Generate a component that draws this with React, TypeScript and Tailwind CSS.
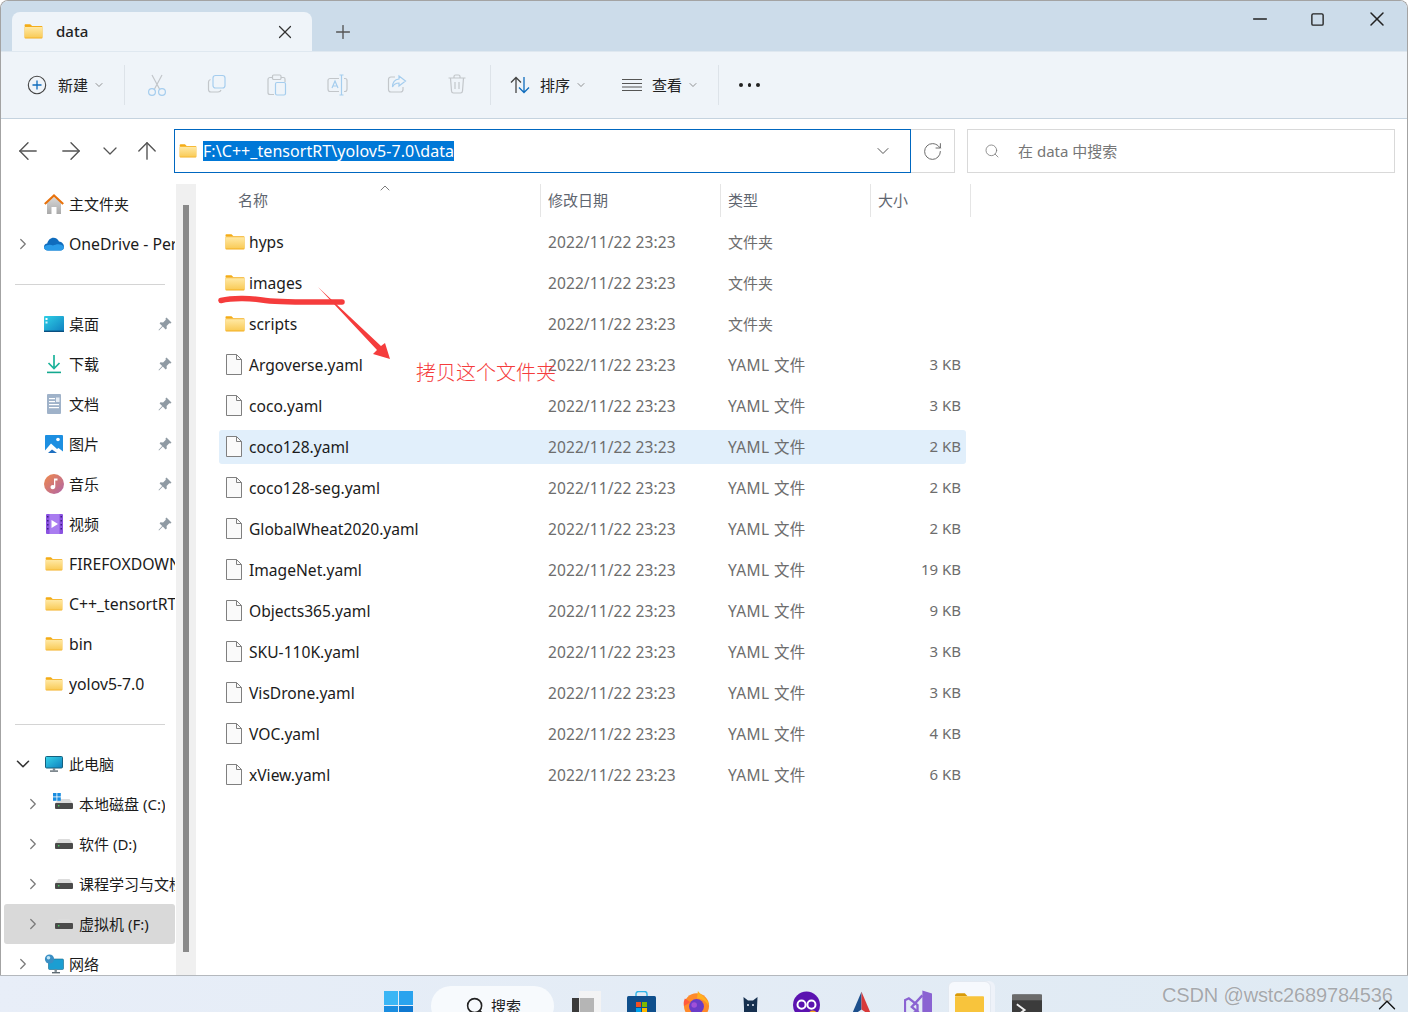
import { ChevronDown, ChevronRight, ChevronUp, ArrowLeft, ArrowRight, ArrowUp, RotateCw, Search, X, Plus, Minus, Square } from 'lucide-react';

// Folder icon, same drawing in tab, address bar, sidebar and list
function FolderIcon({ w = 20, h = 16 }: { w?: number; h?: number }) {
  return (
    <svg width={w} height={h} viewBox="0 0 20 16" className="shrink-0">
      <defs>
        <linearGradient id="folderFill" x1="0" y1="0" x2="0" y2="1">
          <stop offset="0" stopColor="#ffe9a5" />
          <stop offset="1" stopColor="#f9cb58" />
        </linearGradient>
      </defs>
      <path d="M0.5 1.2C0.5 .6 1 .2 1.5 .2H6.5L8.5 2.2H0.5Z" fill="#f4ac16" />
      <rect x="0.5" y="2.2" width="19" height="13.3" rx="0.8" fill="#f4ae1e" />
      <rect x="0.5" y="3.2" width="19" height="11.3" fill="url(#folderFill)" />
    </svg>
  );
}

function FileIcon() {
  return (
    <svg width="18" height="21" viewBox="0 0 18 21" className="shrink-0">
      <path d="M1.5 .5H11.5L16.5 5.5V20.5H1.5Z" fill="#fafafa" stroke="#7f7f7f" />
      <path d="M11.5 .5V5.5H16.5" fill="none" stroke="#7f7f7f" />
    </svg>
  );
}

function PinIcon() {
  return (
    <svg width="14" height="14" viewBox="0 0 14 14">
      <path d="M8.5 .5L13.5 5.5L12.5 6.5L11.3 6.2L8.6 8.9L8.8 11.6L7.6 12.4L4.8 9.6L1 13.5L.5 13L4.2 9L1.6 6.4L2.4 5.2L5.1 5.4L7.8 2.7L7.5 1.5Z" fill="#8f9aa3" />
    </svg>
  );
}

function HomeIcon() {
  return (
    <svg width="20" height="20" viewBox="0 0 20 20">
      <defs>
        <linearGradient id="homeWall" x1="0" y1="0" x2="0" y2="1">
          <stop offset="0" stopColor="#d8d8d8" />
          <stop offset="1" stopColor="#a9a9a9" />
        </linearGradient>
      </defs>
      <path d="M3 9L10 3L17 9V20H12.5V13H7.5V20H3Z" fill="url(#homeWall)" />
      <path d="M.8 10L10 1.5L19.2 10" fill="none" stroke="#e8720c" strokeWidth="2.2" />
    </svg>
  );
}

function CloudIcon() {
  return (
    <svg width="20" height="14" viewBox="0 0 20 14">
      <path d="M4 13.5C1.5 13.5 0 12 0 10C0 8 1.4 6.8 3.2 6.6C4 3 6.5 .8 9.5 .8C12 .8 14 2.2 15 4.5C17.8 4.7 20 7 20 9.8C20 12 18.6 13.5 16.5 13.5Z" fill="#0f6cbd" />
      <path d="M4 13.5C1.5 13.5 0 12 0 10C2 8 6 7 9 8.5C12 7 17 6 20 9.8C20 12 18.6 13.5 16.5 13.5Z" fill="#2a9be8" />
    </svg>
  );
}

function DesktopIcon() {
  return (
    <svg width="20" height="16" viewBox="0 0 20 16">
      <defs>
        <linearGradient id="deskFill" x1="0" y1="0" x2="1" y2="1">
          <stop offset="0" stopColor="#2fd0e6" />
          <stop offset="1" stopColor="#0f7fc0" />
        </linearGradient>
      </defs>
      <rect width="20" height="16" rx="1" fill="url(#deskFill)" />
      <rect y="14.6" width="20" height="1.4" fill="#0a4f80" />
      <rect x="1.5" y="2" width="2" height="2" fill="#fff" />
      <rect x="1.5" y="5.5" width="2" height="2" fill="#d8f3fa" />
    </svg>
  );
}

function DownloadIcon() {
  return (
    <svg width="16" height="20" viewBox="0 0 16 20">
      <path d="M8 1V14M2.5 9L8 14.5L13.5 9" fill="none" stroke="#1cb39b" strokeWidth="1.7" />
      <rect x="1" y="17.6" width="14" height="1.6" fill="#14a98f" />
    </svg>
  );
}

function DocIcon() {
  return (
    <svg width="14" height="20" viewBox="0 0 14 20">
      <rect width="14" height="20" rx="1" fill="#9fb2c9" />
      <rect x="2" y="4" width="6" height="1.2" fill="#fff" />
      <rect x="2" y="7" width="6" height="1.2" fill="#fff" />
      <rect x="9" y="3.5" width="3.5" height="4.5" fill="#e5ecf4" />
      <rect x="2" y="10" width="10" height="1.2" fill="#fff" />
      <rect x="2" y="13" width="10" height="1.2" fill="#fff" />
    </svg>
  );
}

function PictureIcon() {
  return (
    <svg width="18" height="18" viewBox="0 0 18 18">
      <rect width="18" height="18" rx="1" fill="#1d8fe1" />
      <circle cx="13" cy="4.5" r="1.8" fill="#fff" />
      <path d="M0 15.5L6 8.5L12 14L13.5 13L18 16.5V18H0Z" fill="#fff" />
      <path d="M3 18L7 14.5L12 18Z" fill="#1d6fc0" />
    </svg>
  );
}

function MusicIcon() {
  return (
    <svg width="20" height="20" viewBox="0 0 20 20">
      <defs>
        <linearGradient id="musicFill" x1="0" y1="0" x2="1" y2="1">
          <stop offset="0" stopColor="#f0894a" />
          <stop offset="1" stopColor="#b065a8" />
        </linearGradient>
      </defs>
      <circle cx="10" cy="10" r="10" fill="url(#musicFill)" />
      <path d="M10 4.5H13.5V6.5H11.3V12.8C11.3 14.2 10.2 15.2 8.8 15.2C7.5 15.2 6.5 14.4 6.5 13.2C6.5 12 7.6 11.1 8.8 11.1C9.2 11.1 9.7 11.2 10 11.4Z" fill="#fff" />
    </svg>
  );
}

function VideoIcon() {
  return (
    <svg width="17" height="20" viewBox="0 0 17 20">
      <rect width="17" height="20" rx="1" fill="#8a52e0" />
      <rect x="3.5" y="0" width="10" height="20" fill="#a97cf0" />
      <path d="M5.5 6L12 10L5.5 14Z" fill="#fff" />
      <g fill="#3f1e85">
        <rect x="1" y="2" width="1.5" height="1.5" />
        <rect x="1" y="6" width="1.5" height="1.5" />
        <rect x="1" y="10" width="1.5" height="1.5" />
        <rect x="1" y="14" width="1.5" height="1.5" />
        <rect x="14.5" y="2" width="1.5" height="1.5" />
        <rect x="14.5" y="6" width="1.5" height="1.5" />
        <rect x="14.5" y="10" width="1.5" height="1.5" />
        <rect x="14.5" y="14" width="1.5" height="1.5" />
      </g>
    </svg>
  );
}

function MonitorIcon() {
  return (
    <svg width="18" height="16" viewBox="0 0 18 16">
      <defs>
        <linearGradient id="monFill" x1="0" y1="0" x2="1" y2="1">
          <stop offset="0" stopColor="#37d5ea" />
          <stop offset="1" stopColor="#0e7fbd" />
        </linearGradient>
      </defs>
      <rect x=".5" y=".5" width="17" height="11.5" rx="1" fill="url(#monFill)" stroke="#15607f" />
      <rect x="7.8" y="12" width="2.4" height="2.4" fill="#7d8a92" />
      <rect x="5" y="14.4" width="8" height="1.4" fill="#5f6b73" />
    </svg>
  );
}

function DriveIcon({ system = false }: { system?: boolean }) {
  return (
    <span className="relative block w-[18px] h-[10px] shrink-0">
      <svg width="18" height="10" viewBox="0 0 18 10" className="block">
        <path d="M3.5 0H14.5L18 4.5H0Z" fill="#dcdcdc" />
        <rect y="4" width="18" height="6" rx="1" fill="#4b4b4b" />
        <rect x="3" y="6" width="1.4" height="1.4" fill="#46d160" />
      </svg>
      {system && (
        <svg width="8" height="8" viewBox="0 0 8 8" className="absolute -left-[2px] -top-[6px]">
          <rect width="3.5" height="3.5" fill="#1a8de0" />
          <rect x="4.3" width="3.5" height="3.5" fill="#1a8de0" />
          <rect y="4.3" width="3.5" height="3.5" fill="#1a8de0" />
          <rect x="4.3" y="4.3" width="3.5" height="3.5" fill="#1a8de0" />
        </svg>
      )}
    </span>
  );
}

function NetworkIcon() {
  return (
    <svg width="20" height="20" viewBox="0 0 20 20">
      <rect x="4.5" y="5" width="15" height="10.5" rx="1" fill="#1b9ed2" stroke="#14688c" strokeWidth=".6" />
      <rect x="10.5" y="15.5" width="2.4" height="2.4" fill="#7d8a92" />
      <rect x="8" y="18" width="8" height="1.4" fill="#5f6b73" />
      <circle cx="5.5" cy="5" r="4.6" fill="#3a8fc4" />
      <circle cx="4.5" cy="3.8" r="1.8" fill="#bfe4f6" />
    </svg>
  );
}

function SidebarRow({
  indent = 0,
  chevron,
  icon,
  label,
  pinned,
  selected,
  latin,
}: {
  indent?: number;
  chevron?: 'right' | 'down';
  icon: React.ReactNode;
  label: string;
  pinned?: boolean;
  selected?: boolean;
  latin?: boolean;
}) {
  return (
    <div className={`h-10 ml-[3px] w-[171px] flex items-center rounded-[3px] ${selected ? 'bg-[#d9d9d9]' : ''}`}>
      <span className={`shrink-0 flex text-[#7b7b7b] ${indent ? 'w-[51px] pl-[21px]' : 'w-[40px] pl-[11px]'}`}>
        <span className="w-4 h-4 flex items-center justify-center">
          {chevron === 'right' && <ChevronRight size={18} strokeWidth={1.7} className="shrink-0" />}
          {chevron === 'down' && <ChevronDown size={22} strokeWidth={1.7} className="shrink-0 text-[#333333]" />}
        </span>
      </span>
      <span className={`shrink-0 flex justify-center ${indent ? 'w-[18px] mr-[6px]' : 'w-5 mr-[5px]'}`}>{icon}</span>
      <span className={`min-w-0 overflow-hidden whitespace-nowrap text-[#1b1b1b] ${latin ? 'text-[15.8px] pt-[2px]' : 'text-[15px]'}`}>{label}</span>
      {pinned && (
        <span className="ml-auto mr-[3px] shrink-0 flex">
          <PinIcon />
        </span>
      )}
    </div>
  );
}

function SidebarLine() {
  return (
    <div className="h-10 flex items-center pl-[14px]">
      <div className="w-[150px] h-px bg-[#d4d4d4]" />
    </div>
  );
}

const files = [
  { name: 'hyps', type: '文件夹', size: '', folder: true },
  { name: 'images', type: '文件夹', size: '', folder: true },
  { name: 'scripts', type: '文件夹', size: '', folder: true },
  { name: 'Argoverse.yaml', type: 'YAML 文件', size: '3 KB' },
  { name: 'coco.yaml', type: 'YAML 文件', size: '3 KB' },
  { name: 'coco128.yaml', type: 'YAML 文件', size: '2 KB', hover: true },
  { name: 'coco128-seg.yaml', type: 'YAML 文件', size: '2 KB' },
  { name: 'GlobalWheat2020.yaml', type: 'YAML 文件', size: '2 KB' },
  { name: 'ImageNet.yaml', type: 'YAML 文件', size: '19 KB' },
  { name: 'Objects365.yaml', type: 'YAML 文件', size: '9 KB' },
  { name: 'SKU-110K.yaml', type: 'YAML 文件', size: '3 KB' },
  { name: 'VisDrone.yaml', type: 'YAML 文件', size: '3 KB' },
  { name: 'VOC.yaml', type: 'YAML 文件', size: '4 KB' },
  { name: 'xView.yaml', type: 'YAML 文件', size: '6 KB' },
];

export default function App() {
  return (
    <div className="relative w-[1408px] h-[1012px] overflow-hidden flex flex-col bg-white font-['Noto_Sans','Noto_Sans_CJK_SC',sans-serif]">
      {/* Window */}
      <div className="h-[975px] flex flex-col border-l border-r border-t border-[#a3a3a3] rounded-t-lg overflow-hidden">
        {/* Title bar with tab */}
        <div className="h-[50px] shrink-0 bg-[#ccdcea] flex items-end">
          <div className="ml-[11px] w-[300px] h-[39px] bg-[#eff4f9] rounded-t-lg flex items-center pl-3">
            <FolderIcon w={19} h={15} />
            <span className="ml-[13px] text-[15px] font-medium text-[#222222]">data</span>
            <span className="ml-auto mr-[19px] w-4 h-4 flex items-center justify-center">
              <X size={22} strokeWidth={1.3} className="shrink-0 text-[#333333]" />
            </span>
          </div>
          <div className="h-[39px] flex items-center ml-[20px]">
            <Plus size={22} strokeWidth={1.5} className="text-[#555555]" />
          </div>
          <div className="ml-auto self-start h-9 flex items-center text-[#222222]">
            <Minus size={22} strokeWidth={1.4} />
            <Square size={15} strokeWidth={2.2} className="ml-[39px]" />
            <X size={24} strokeWidth={1.5} className="ml-[40px] mr-[18px]" />
          </div>
        </div>

        {/* Command bar */}
        <div className="h-[68px] shrink-0 bg-[#eff4f9] border-t border-b border-[#c5d3df] border-t-[#dfe8f0] flex items-center pl-[26px] text-[15px] text-[#222222]">
          <svg width="20" height="20" viewBox="0 0 20 20" className="shrink-0">
            <circle cx="10" cy="10" r="8.7" fill="none" stroke="#444444" strokeWidth="1.1" />
            <path d="M10 5.5V14.5M5.5 10H14.5" stroke="#0f6cbd" strokeWidth="1.3" />
          </svg>
          <span className="ml-[11px] w-[30px] whitespace-nowrap">新建</span>
          <ChevronDown size={12} strokeWidth={1.4} className="ml-[5px] shrink-0 text-[#666666]" />
          <div className="ml-[19px] w-px h-10 bg-[#dde3e9]" />
          <div className="ml-[2px] flex">
            <span className="w-[60px] flex justify-center">
              <svg width="20" height="22" viewBox="0 0 20 22" fill="none" strokeWidth="1.2">
                <path d="M5 1L12.5 15M15 1L7.5 15" stroke="#c2c6ca" />
                <circle cx="5" cy="18" r="3.4" stroke="#a5cdee" />
                <circle cx="15" cy="18" r="3.4" stroke="#a5cdee" />
              </svg>
            </span>
            <span className="w-[60px] flex justify-center">
              <svg width="20" height="20" viewBox="0 0 20 20" fill="none" strokeWidth="1.2">
                <path d="M3.5 5.5C2 6 1.5 7 1.5 8V15.5C1.5 17 2.5 18 4 18H11C12.5 18 13.5 17.5 14 16" stroke="#c2c6ca" />
                <rect x="6" y="1.5" width="12" height="12.5" rx="2.5" stroke="#a5cdee" />
              </svg>
            </span>
            <span className="w-[60px] flex justify-center">
              <svg width="20" height="22" viewBox="0 0 20 22" fill="none" strokeWidth="1.2">
                <path d="M5.5 3.5H3C2 3.5 1 4.5 1 5.5V18.5C1 20 2 20.5 3 20.5H7M14 3.5H16.5C17.5 3.5 18 4 18 5V8" stroke="#c2c6ca" />
                <rect x="5.5" y="1" width="8.5" height="4.5" rx="1.2" stroke="#c2c6ca" />
                <rect x="8.5" y="8.5" width="10" height="12.5" rx="1.5" stroke="#a5cdee" />
              </svg>
            </span>
            <span className="w-[60px] flex justify-center">
              <svg width="21" height="22" viewBox="0 0 21 22" fill="none" strokeWidth="1.2">
                <path d="M12 4.5H3C2 4.5 1 5.5 1 6.5V15C1 16.5 2 17.5 3 17.5H12M17 4.5H18C19 4.5 20 5.5 20 6.5V15C20 16.5 19 17.5 18 17.5H17" stroke="#c2c6ca" />
                <path d="M14.5 1V21M12.5 1H16.5M12.5 21H16.5M5 14L8 7L11 14M6 12H10" stroke="#a5cdee" />
              </svg>
            </span>
            <span className="w-[60px] flex justify-center">
              <svg width="20" height="20" viewBox="0 0 20 20" fill="none" strokeWidth="1.2">
                <path d="M8 3H4C2.5 3 1.5 4 1.5 5.5V15.5C1.5 17 2.5 18 4 18H13.5C15 18 16 17 16 15.5V13" stroke="#c2c6ca" />
                <path d="M12 2L18.5 7L12 12V9C9 9 7 10 5.5 13C5.5 8.5 8 5.5 12 5Z" stroke="#a5cdee" />
              </svg>
            </span>
            <span className="w-[60px] flex justify-center">
              <svg width="18" height="20" viewBox="0 0 18 20" fill="none" stroke="#c2c6ca" strokeWidth="1.2">
                <path d="M.5 4H17.5M6 4V2.5C6 1.5 6.8 1 7.5 1H10.5C11.2 1 12 1.5 12 2.5V4M2.5 4L3.5 17C3.6 18.2 4.5 19 5.5 19H12.5C13.5 19 14.4 18.2 14.5 17L15.5 4M7 8V15M11 8V15" />
              </svg>
            </span>
          </div>
          <div className="ml-[3px] w-px h-10 bg-[#dde3e9]" />
          <svg width="20" height="18" viewBox="0 0 20 18" fill="none" strokeWidth="1.3" className="ml-[19px] shrink-0">
            <path d="M6 17V1.5M1 6.5L6 1.5L11 6.5" stroke="#444444" />
            <path d="M14 1V16.5M9 11.5L14 16.5L19 11.5" stroke="#0f6cbd" />
          </svg>
          <span className="ml-[10px] w-[30px] whitespace-nowrap">排序</span>
          <ChevronDown size={12} strokeWidth={1.4} className="ml-[5px] shrink-0 text-[#666666]" />
          <svg width="20" height="14" viewBox="0 0 20 14" stroke="#555555" className="ml-[35px] shrink-0">
            <path d="M0 1.5H20M0 5.5H20M0 9H20M0 12.5H20" />
          </svg>
          <span className="ml-[10px] w-[30px] whitespace-nowrap">查看</span>
          <ChevronDown size={12} strokeWidth={1.4} className="ml-[5px] shrink-0 text-[#666666]" />
          <div className="ml-[19px] w-px h-10 bg-[#dde3e9]" />
          <div className="ml-5 flex gap-[5px]">
            <span className="w-[3.5px] h-[3.5px] rounded-full bg-[#222222]" />
            <span className="w-[3.5px] h-[3.5px] rounded-full bg-[#222222]" />
            <span className="w-[3.5px] h-[3.5px] rounded-full bg-[#222222]" />
          </div>
        </div>

        {/* Address row */}
        <div className="h-[65px] shrink-0 flex items-center pl-[17px] pb-[1px]">
          <span className="w-5 h-5 flex items-center justify-center shrink-0">
            <ArrowLeft size={28} strokeWidth={1.2} className="shrink-0 text-[#555555]" />
          </span>
          <span className="ml-[23px] w-5 h-5 flex items-center justify-center shrink-0">
            <ArrowRight size={28} strokeWidth={1.2} className="shrink-0 text-[#555555]" />
          </span>
          <span className="ml-[22px] w-[14px] h-5 flex items-center justify-center shrink-0">
            <ChevronDown size={24} strokeWidth={1.3} className="shrink-0 text-[#555555]" />
          </span>
          <span className="ml-[20px] w-5 h-5 flex items-center justify-center shrink-0">
            <ArrowUp size={28} strokeWidth={1.2} className="shrink-0 text-[#555555]" />
          </span>
          <div className="ml-[17px] w-[737px] h-11 shrink-0 border border-[#0067c0] flex items-center pl-1">
            <FolderIcon w={18} h={14} />
            <span className="ml-[6px] bg-[#0078d7] text-white text-[16px] tracking-[0.06px] leading-[20px] whitespace-nowrap">F:\C++_tensortRT\yolov5-7.0\data</span>
            <ChevronDown size={20} strokeWidth={1.2} className="ml-auto mr-[17px] text-[#555555]" />
          </div>
          <div className="w-11 h-11 shrink-0 border border-l-0 border-[#d9d9d9] flex items-center justify-center">
            <RotateCw size={21} strokeWidth={1.1} className="text-[#666666]" />
          </div>
          <div className="ml-3 w-[428px] h-11 shrink-0 border border-[#d9d9d9] flex items-center pl-4 text-[15px] text-[#767676]">
            <Search size={16} strokeWidth={1.2} className="text-[#777777]" />
            <span className="ml-[18px]">在 data 中搜索</span>
          </div>
        </div>

        {/* Body */}
        <div className="flex-1 min-h-0 flex">
          {/* Navigation pane */}
          <div className="w-[175px] shrink-0 overflow-hidden">
            <SidebarRow icon={<HomeIcon />} label="主文件夹" />
            <SidebarRow chevron="right" icon={<CloudIcon />} label="OneDrive - Personal" latin />
            <SidebarLine />
            <SidebarRow icon={<DesktopIcon />} label="桌面" pinned />
            <SidebarRow icon={<DownloadIcon />} label="下载" pinned />
            <SidebarRow icon={<DocIcon />} label="文档" pinned />
            <SidebarRow icon={<PictureIcon />} label="图片" pinned />
            <SidebarRow icon={<MusicIcon />} label="音乐" pinned />
            <SidebarRow icon={<VideoIcon />} label="视频" pinned />
            <SidebarRow icon={<FolderIcon w={18} h={14} />} label="FIREFOXDOWNLOADS" latin />
            <SidebarRow icon={<FolderIcon w={18} h={14} />} label="C++_tensortRT" latin />
            <SidebarRow icon={<FolderIcon w={18} h={14} />} label="bin" latin />
            <SidebarRow icon={<FolderIcon w={18} h={14} />} label="yolov5-7.0" latin />
            <SidebarLine />
            <SidebarRow chevron="down" icon={<MonitorIcon />} label="此电脑" />
            <SidebarRow indent={1} chevron="right" icon={<DriveIcon system />} label="本地磁盘 (C:)" />
            <SidebarRow indent={1} chevron="right" icon={<DriveIcon />} label="软件 (D:)" />
            <SidebarRow indent={1} chevron="right" icon={<DriveIcon />} label="课程学习与文档" />
            <SidebarRow indent={1} chevron="right" icon={<DriveIcon />} label="虚拟机 (F:)" selected />
            <SidebarRow chevron="right" icon={<NetworkIcon />} label="网络" />
          </div>

          {/* Scrollbar */}
          <div className="w-5 shrink-0 bg-[#f0f0f0] pl-[7px] pt-[21px]">
            <div className="w-[6px] h-[747px] bg-[#8a8a8a]" />
          </div>

          {/* File list */}
          <div className="pl-[23px]">
            <div className="relative h-[33px] w-[752px] grid grid-cols-[322px_180px_150px_100px] text-[15px] text-[#5f6670]">
              <div className="border-r border-[#e5e5e5] pl-[19px] flex items-center">名称</div>
              <ChevronUp size={16} strokeWidth={1.3} className="absolute left-[158px] -top-[4px] text-[#666666]" />
              <div className="border-r border-[#e5e5e5] pl-[7px] flex items-center">修改日期</div>
              <div className="border-r border-[#e5e5e5] pl-[7px] flex items-center">类型</div>
              <div className="border-r border-[#e5e5e5] pl-[7px] flex items-center">大小</div>
            </div>
            <div className="mt-[8px] flex flex-col gap-[7px]">
              {files.map((f) => (
                <div
                  key={f.name}
                  className={`h-[34px] w-[747px] rounded-[3px] grid grid-cols-[321px_180px_150px_96px] items-center text-[15px] ${f.hover ? 'bg-[#e1effb]' : ''}`}
                >
                  <div className="flex items-center">
                    <span className="w-[30px] pl-[6px] flex">{f.folder ? <FolderIcon /> : <FileIcon />}</span>
                    <span className="pt-[2px] text-[15.6px] text-[#1b1b1b] whitespace-nowrap">{f.name}</span>
                  </div>
                  <div className="pl-2 pt-[2px] text-[15.5px] tracking-[0.1px] text-[#6d6d6d]">2022/11/22 23:23</div>
                  <div className={`pl-2 text-[#6d6d6d] ${f.folder ? 'text-[15px]' : 'pt-[2px] text-[15.5px] tracking-[0.4px]'}`}>{f.type}</div>
                  <div className="pr-[5px] pb-[2px] text-right text-[#6d6d6d]">{f.size}</div>
                </div>
              ))}
            </div>
          </div>
        </div>
      </div>

      {/* Taskbar, icons cut off by the bottom of the capture */}
      <div className="h-[37px] shrink-0 overflow-hidden border-t border-[#b4b8bd] bg-gradient-to-r from-[#e8eef8] to-[#dfeaf3] flex items-start pl-[384px]">
        <div className="mt-[15px] shrink-0 w-[29px] h-[29px] grid grid-cols-2 gap-[1px]">
          <span className="bg-[#3bb6f5]" />
          <span className="bg-[#2aa3ee]" />
          <span className="bg-[#1a8de0]" />
          <span className="bg-[#0f78d0]" />
        </div>
        <div className="ml-[18px] mt-[10px] shrink-0 w-[123px] h-[40px] rounded-full bg-[#f7fafd] flex items-start pt-[9px] pl-[34px] text-[15px] text-[#222222]">
          <Search size={21} strokeWidth={1.8} className="mt-[1px] shrink-0" />
          <span className="ml-[5px] leading-[22px]">搜索</span>
        </div>
        <div className="ml-[18px] mt-[15px] shrink-0 relative w-[29px] h-[29px]">
          <div className="absolute left-0 top-[7px] w-[22px] h-[22px] bg-[#3a3a3a]" />
          <div className="absolute right-0 top-0 w-[22px] h-[22px] bg-[#f4f4f4] opacity-90" />
          <div className="absolute left-[8px] top-[7px] w-[14px] h-[15px] bg-[#b5b5b5]" />
        </div>
        <svg width="29" height="32" viewBox="0 0 29 32" className="ml-[26px] mt-[15px] shrink-0">
          <path d="M9 6V3C9 1.5 10 .5 11.5 .5H17.5C19 .5 20 1.5 20 3V6" fill="none" stroke="#2fb4e8" strokeWidth="1.4" />
          <rect y="5" width="29" height="27" rx="1.5" fill="#0f4f8c" />
          <rect x="9" y="11" width="5" height="5" fill="#f25022" />
          <rect x="15" y="11" width="5" height="5" fill="#7fba00" />
          <rect x="9" y="17" width="5" height="5" fill="#00a4ef" />
          <rect x="15" y="17" width="5" height="5" fill="#ffb900" />
        </svg>
        <svg width="27" height="30" viewBox="0 0 29 30" className="ml-[27px] mt-[14px] shrink-0">
          <circle cx="14.5" cy="16" r="13.5" fill="#ff8a2a" />
          <path d="M16 0C20 5 27 8 28 16C24 10 20 8 15 8Z" fill="#ffb020" />
          <path d="M2 8C0 12 1 16 1 16L8 12Z" fill="#ff5a3c" />
          <circle cx="14.5" cy="16.5" r="8" fill="#6a3cc8" />
          <circle cx="12" cy="15" r="3" fill="#a050d8" />
        </svg>
        <svg width="21" height="26" viewBox="0 0 21 26" className="ml-[30px] mt-[19px] shrink-0">
          <path d="M4 13L3.5 2L8 5.5H13L17.5 2L17 13V26H4Z" fill="#16304f" />
          <circle cx="8" cy="10" r="1" fill="#e8eef8" />
          <circle cx="13" cy="10" r="1" fill="#e8eef8" />
          <path d="M2 26C0 23 1 21 2.5 21" fill="none" stroke="#16304f" strokeWidth="1.2" />
        </svg>
        <svg width="27" height="30" viewBox="0 0 30 32" className="ml-[32px] mt-[15px] shrink-0">
          <circle cx="15" cy="15" r="15" fill="#5b12b0" />
          <circle cx="9.5" cy="14.5" r="4.5" fill="none" stroke="#fff" strokeWidth="2.2" />
          <circle cx="20.5" cy="14.5" r="4.5" fill="none" stroke="#fff" strokeWidth="2.2" />
          <circle cx="22" cy="26" r="5" fill="#f5a623" />
        </svg>
        <svg width="23" height="32" viewBox="0 0 26 32" className="ml-[30px] mt-[14px] shrink-0">
          <path d="M13 0L1 28L13 20Z" fill="#1c4f8c" />
          <path d="M13 0L25 28L13 20Z" fill="#d83a3a" />
        </svg>
        <svg width="28" height="30" viewBox="0 0 29 30" className="ml-[31px] mt-[14px] shrink-0">
          <path d="M19 0L29 3V30H19Z" fill="#8a63d2" />
          <path d="M1 10L5 8L14 15V21L5 26L1 24Z" fill="none" stroke="#8a63d2" strokeWidth="2.4" />
          <path d="M19 5L8 17L19 26" fill="none" stroke="#8a63d2" strokeWidth="2.4" />
        </svg>
        <div className="ml-[16px] mt-[5px] shrink-0 w-[43px] h-[40px] rounded-t-md bg-[#f6f9fd] border border-[#e3e9f1] shadow-[4px_0_0_#eef2f9] flex justify-center pt-[10px]">
          <svg width="29" height="28" viewBox="0 0 31 28" className="shrink-0">
            <path d="M0 3C0 1.5 1 .5 2.5 .5H10.5L13.5 3.5H0Z" fill="#d99a08" />
            <rect y="3.5" width="31" height="24" rx="1" fill="#f8c43c" />
          </svg>
        </div>
        <svg width="30" height="30" viewBox="0 0 31 30" className="ml-[21px] mt-[18px] shrink-0">
          <rect width="31" height="30" rx="2" fill="#3b3b3b" />
          <rect width="31" height="6" fill="#6b6b6b" />
          <path d="M5 10L13 16L5 22" fill="none" stroke="#f0f0f0" strokeWidth="2" />
          <path d="M14 24H24" stroke="#f0f0f0" strokeWidth="2" />
        </svg>
      </div>

      {/* Red marks drawn over the screenshot */}
      <svg width="1408" height="1012" viewBox="0 0 1408 1012" className="absolute left-0 top-0 pointer-events-none">
        <path d="M221 300.5C232 298 250 298 262 300C280 303 310 302 342 302" fill="none" stroke="#f53c3c" strokeWidth="5.5" strokeLinecap="round" />
        <path d="M318 287L381 346L385 343L390 359L373 354L377 350Z" fill="#f53c3c" />
      </svg>
      <span className="absolute left-[416px] top-[358px] text-[20px] leading-[30px] font-light text-[#f53c3c] whitespace-nowrap">拷贝这个文件夹</span>

      {/* Watermark and tray chevron */}
      <span className="absolute left-[1162px] top-[983px] font-['Liberation_Sans',sans-serif] text-[20px] tracking-[-0.15px] leading-[24px] text-[#a4a8ac] [text-shadow:0_0_1px_#ffffff] whitespace-nowrap">CSDN @wstc2689784536</span>
      <ChevronUp size={30} strokeWidth={1.1} className="absolute left-[1372px] top-[990px] text-[#111111]" />
    </div>
  );
}
